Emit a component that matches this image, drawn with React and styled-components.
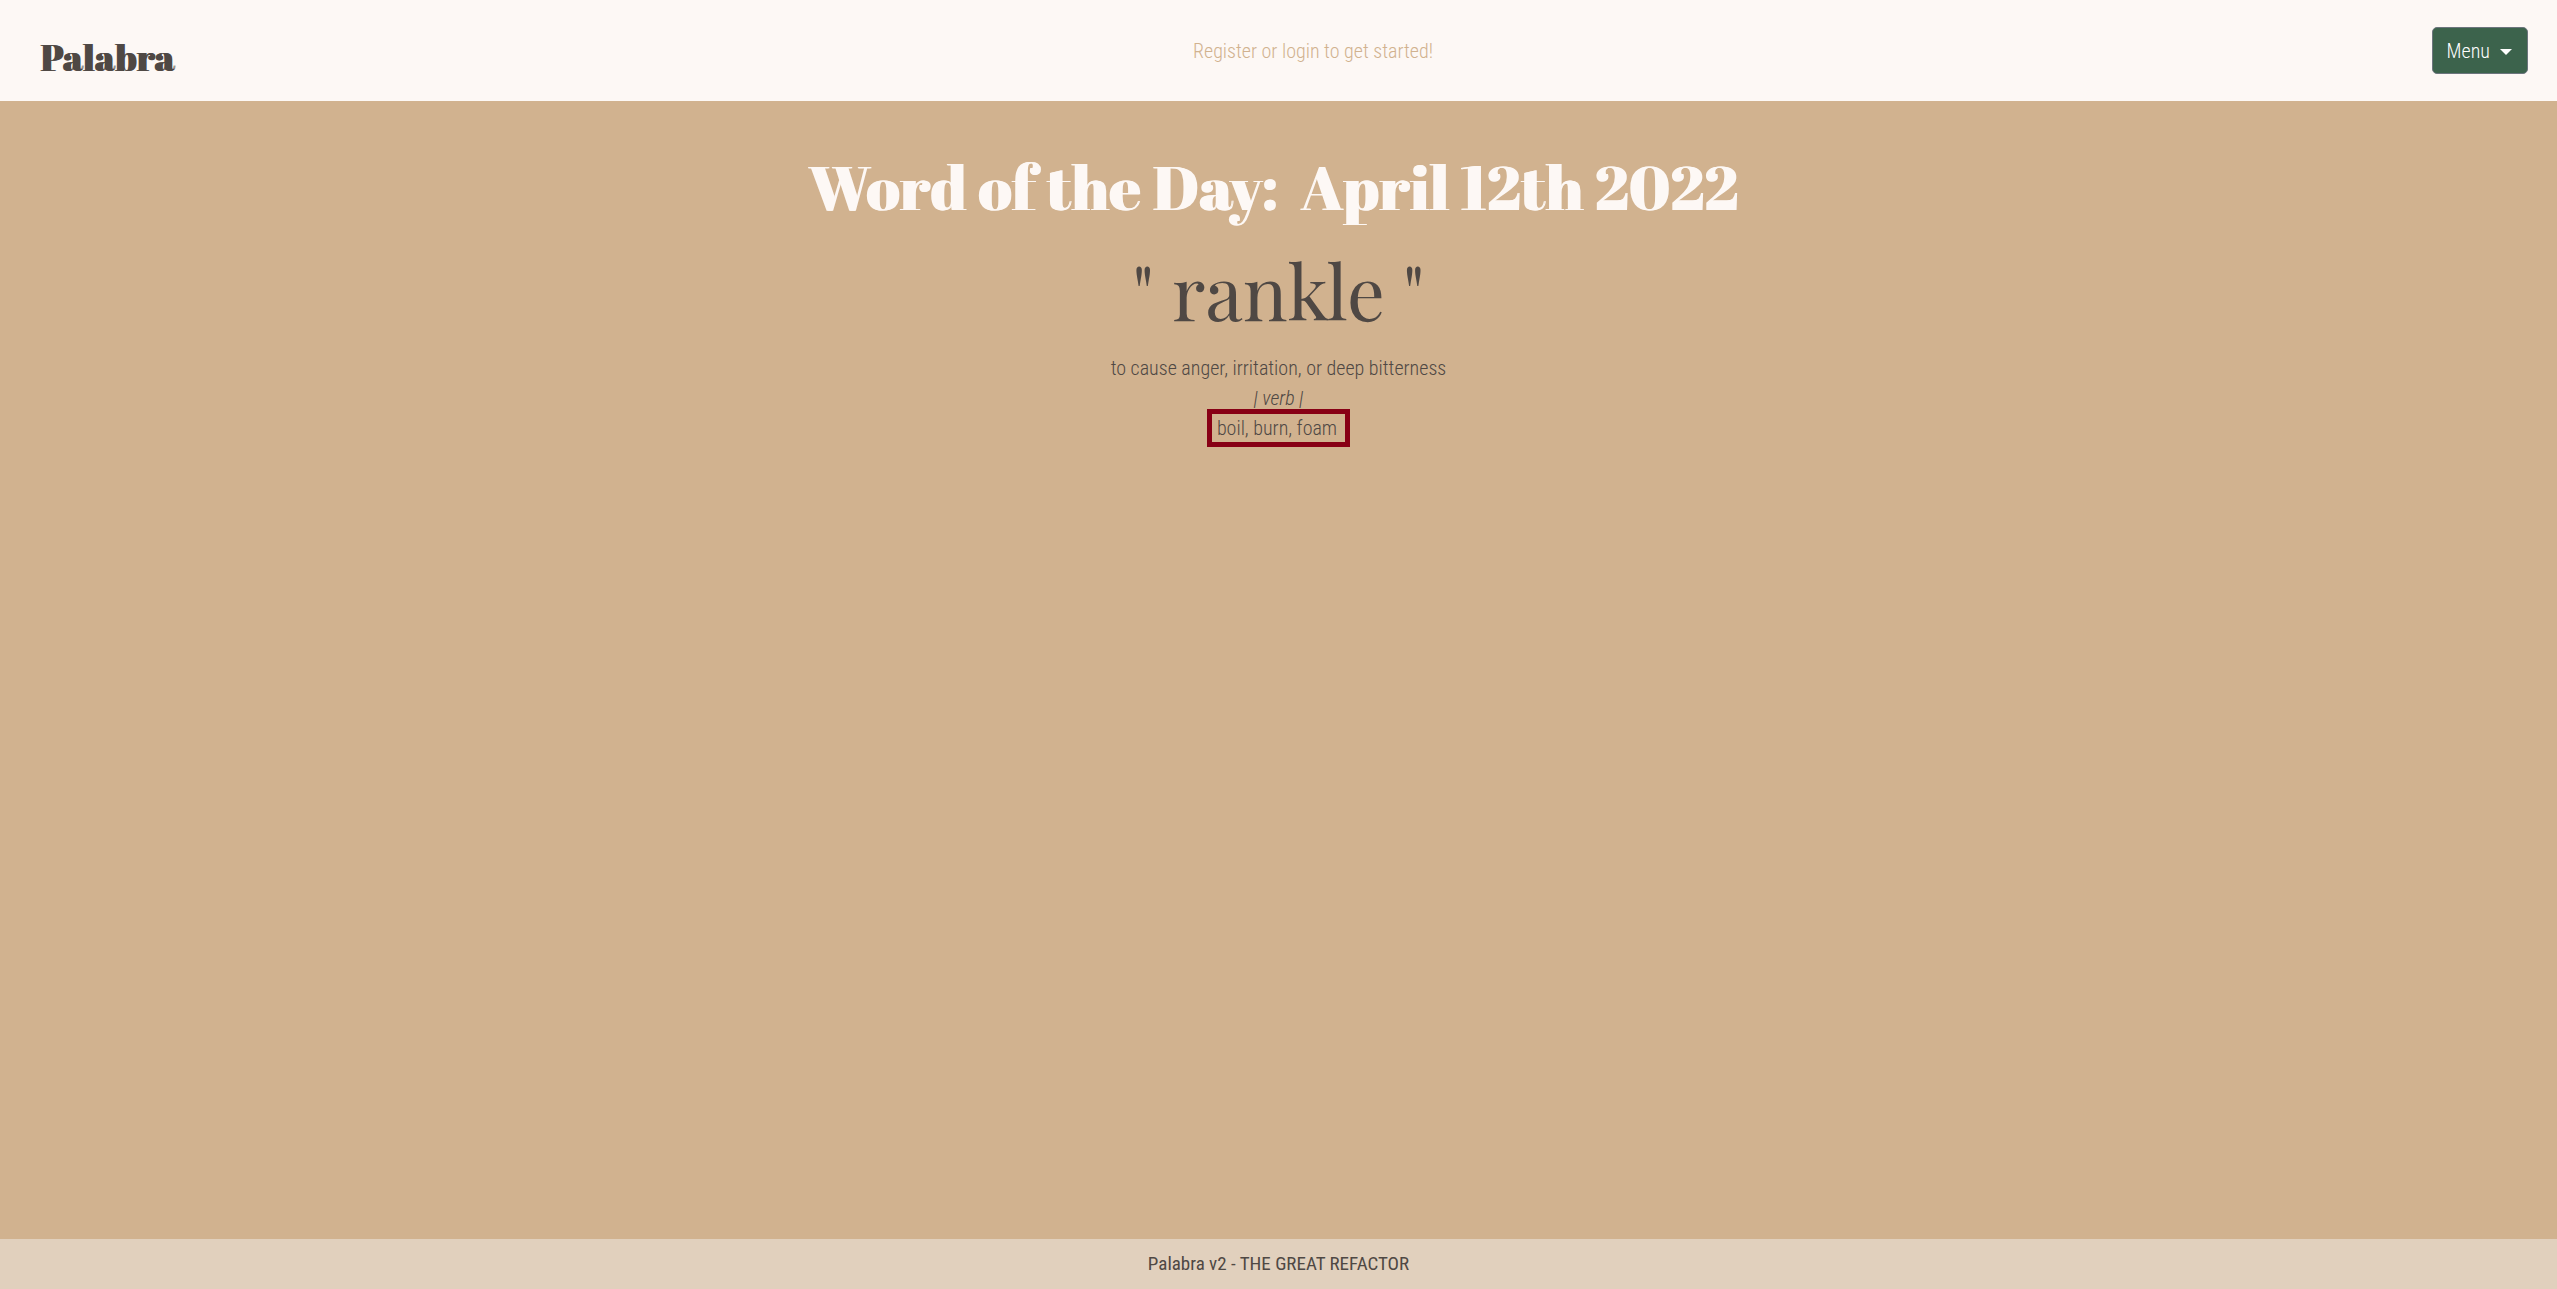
import React from "react";
import styled, { createGlobalStyle } from "styled-components";

const color = {
  cream: "#fdf8f5",
  tan: "#d1b28f",
  sand: "#e1d0bd",
  ink: "#4f4844",
  green: "#3c634c",
  outline: "#6c757d",
  maroon: "#880015",
};

const sans = `"Roboto Condensed", "Liberation Sans Narrow", Roboto, sans-serif`;
const display = `"Abril Fatface", "Liberation Serif", serif`;

const GlobalStyle = createGlobalStyle`
  *, *::before, *::after { box-sizing: border-box; }
  body {
    margin: 0;
    background: ${color.tan};
    color: ${color.ink};
    font-family: ${sans};
    font-size: 20px;
    font-weight: 300;
    line-height: 30px;
  }
`;

const Page = styled.div`
  display: flex;
  flex-direction: column;
  min-height: 100vh;
`;

const Header = styled.header`
  display: flex;
  align-items: center;
  justify-content: space-between;
  padding: 27px 29px 27px 40px;
  background: ${color.cream};
`;

const Brand = styled.a`
  margin-right: 20px;
  padding-top: 14px;
  color: ${color.ink};
  font-family: ${display};
  font-size: 37px;
  font-weight: 400;
  line-height: 33px;
  text-decoration: none;
  text-shadow: 1px 0 ${color.ink};
`;

const Prompt = styled.p`
  margin: 0;
  color: ${color.tan};
`;

const MenuButton = styled.button`
  display: flex;
  align-items: center;
  gap: 10px;
  padding: 9px 15px 7px 14px;
  border: 1px solid ${color.outline};
  border-radius: 5px;
  background: ${color.green};
  color: #fff;
  font: inherit;
  line-height: 29px;
  cursor: pointer;
`;

const Caret = styled.span`
  border: 6px solid transparent;
  border-top-color: #fff;
  border-bottom: 0;
`;

const Main = styled.main`
  display: flex;
  flex: 1;
  flex-direction: column;
  align-items: center;
  padding-top: 46px;
  text-align: center;
`;

const Title = styled.h1`
  margin: 0;
  color: ${color.cream};
  font-family: ${display};
  font-size: 62px;
  font-weight: 400;
  line-height: 78px;
  text-shadow: 1px 0 ${color.cream};
`;

const Word = styled.h2`
  margin: 15px 0 13px;
  font-family: "Playfair Display", "Liberation Serif", serif;
  font-size: 75px;
  font-weight: 400;
  line-height: 100px;
`;

const Line = styled.p`
  margin: 0;
`;

const Synonyms = styled.span`
  padding: 2px 8px 2px 5px;
  border: 5px solid ${color.maroon};
`;

const Footer = styled.footer`
  padding: 10px;
  background: ${color.sand};
  font-size: 19px;
  font-weight: 400;
  text-align: center;
`;

export default function App() {
  return (
    <Page>
      <GlobalStyle />
      <Header>
        <Brand href="#">Palabra</Brand>
        <Prompt>Register or login to get started!</Prompt>
        <MenuButton type="button" aria-haspopup="true">
          Menu
          <Caret />
        </MenuButton>
      </Header>
      <Main>
        <Title>{"Word of the Day: \u00a0April 12th 2022\u00a0"}</Title>
        <Word>" rankle "</Word>
        <Line>to cause anger, irritation, or deep bitterness</Line>
        <Line as="em">| verb |</Line>
        <Line>
          <Synonyms>boil, burn, foam</Synonyms>
        </Line>
      </Main>
      <Footer>Palabra v2 - THE GREAT REFACTOR</Footer>
    </Page>
  );
}
